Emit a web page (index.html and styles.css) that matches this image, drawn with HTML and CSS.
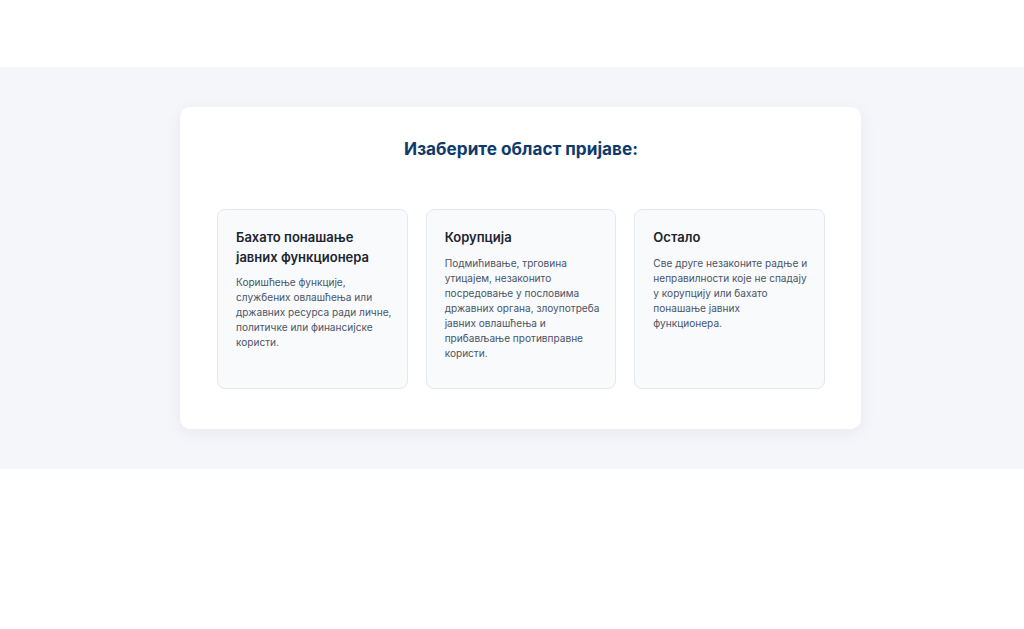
FILE: index.html
```html
<!doctype html>
<html lang="sr">
<head>
  <meta charset="UTF-8">
  <title>Пријава</title>
  <link rel="stylesheet" href="styles.css">
</head>
<body>
  <div class="top"></div>
  <section class="area">
    <div class="panel">
      <h2 class="panel-title">Изаберите област пријаве:</h2>
      <div class="options">
        <div class="option">
          <h3>Бахато понашање јавних функционера</h3>
          <p>Коришћење функције, службених овлашћења или државних ресурса ради личне, политичке или финансијске користи.</p>
        </div>
        <div class="option">
          <h3>Корупција</h3>
          <p>Подмићивање, трговина утицајем, незаконито посредовање у пословима државних органа, злоупотреба јавних овлашћења и прибављање противправне користи.</p>
        </div>
        <div class="option">
          <h3>Остало</h3>
          <p>Све друге незаконите радње и неправилности које не спадају у корупцију или бахато понашање јавних функционера.</p>
        </div>
      </div>
    </div>
  </section>
</body>
</html>
```

FILE: styles.css
```css
body, h2, h3, p {
  margin: 0;
  padding: 0;
}

body {
  font-family: Inter, "Noto Sans", sans-serif;
  background: #ffffff;
}

.top {
  height: 67px;
}

.area {
  background: #f5f6fa;
  padding: 40px 0 40px 17px;
}

.panel {
  width: 681px;
  box-sizing: border-box;
  margin: 0 auto;
  background: #ffffff;
  border-radius: 10px;
  box-shadow: 0 4px 18px rgba(30, 41, 80, 0.06);
  padding: 28px 36px 40px 37px;
}

.panel-title {
  text-align: center;
  font-size: 17.2px;
  line-height: 27px;
  font-weight: 700;
  color: #0f3a6b;
  margin-bottom: 47px;
}

.options {
  display: grid;
  grid-template-columns: repeat(3, 1fr);
  gap: 18px;
}

.option {
  background: #f8fafc;
  border: 1px solid #e4e8ee;
  border-radius: 8px;
  padding: 18px 15px 18px 18px;
  height: 180px;
  box-sizing: border-box;
}

.option h3 {
  font-size: 13px;
  line-height: 19.5px;
  font-weight: 600;
  color: #1c2430;
  margin-bottom: 8px;
  padding-right: 3px;
}

.option p {
  font-size: 10.1px;
  line-height: 15px;
  color: #4b5566;
}
```
